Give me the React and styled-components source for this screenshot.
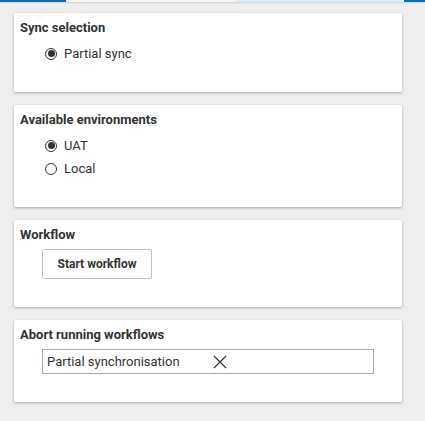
import React from "react";
import styled, { createGlobalStyle } from "styled-components";

const GlobalStyle = createGlobalStyle`
  html, body {
    margin: 0;
    padding: 0;
    background: #eeeeee;
    font-family: Roboto, "Liberation Sans", Arial, sans-serif;
    color: #333333;
  }
`;

const Page = styled.div`
  width: 425px;
  min-height: 421px;
  background: #eeeeee;
`;

const Stripe = styled.div`
  display: flex;
  height: 2px;
  box-shadow: 0 1px 2px rgba(0, 0, 0, 0.12);
`;

const Segment = styled.div`
  width: ${({ w }) => w}px;
  background: ${({ color }) => color};
`;

const Stack = styled.div`
  display: flex;
  flex-direction: column;
  gap: 13px;
  width: 388px;
  padding: 11px 0 0 14px;
`;

const Card = styled.section`
  background: #ffffff;
  border-radius: 2px;
  box-shadow: 0 1px 3px rgba(0, 0, 0, 0.28);
  padding: 6px 6px ${({ bottom }) => bottom}px 6px;
  display: flex;
  flex-direction: column;
  gap: ${({ gap }) => gap}px;
`;

const Title = styled.h3`
  margin: 0;
  font-size: 13px;
  font-weight: 700;
  line-height: 18px;
  color: #333333;
`;

const Body = styled.div`
  margin-left: 22px;
  display: flex;
  flex-direction: column;
  align-items: flex-start;
`;

const RadioRow = styled.label`
  display: flex;
  align-items: center;
  height: 23px;
  gap: 7px;
  font-size: 13px;
  color: #333333;
  padding-left: 3px;
`;

const RadioMark = styled.span`
  box-sizing: border-box;
  width: 12px;
  height: 12px;
  border-radius: 50%;
  border: 1.3px solid #333333;
  display: flex;
  align-items: center;
  justify-content: center;

  &::after {
    content: "";
    width: 7px;
    height: 7px;
    border-radius: 50%;
    background: ${({ checked }) => (checked ? "#333333" : "transparent")};
  }
`;

const Button = styled.button`
  box-sizing: border-box;
  height: 30px;
  width: 110px;
  background: #ffffff;
  border: 1px solid #c4c4c4;
  border-radius: 2px;
  font-family: inherit;
  font-size: 12px;
  font-weight: 700;
  color: #333333;
  padding: 0;
`;

const Field = styled.div`
  box-sizing: border-box;
  width: 332px;
  height: 25px;
  border: 1px solid #aaaaaa;
  display: flex;
  align-items: center;
  padding-left: 4px;
  font-size: 13px;
  color: #333333;
`;

const FieldText = styled.span`
  width: 166px;
`;

const Radio = ({ checked, children }) => (
  <RadioRow>
    <RadioMark checked={checked} />
    {children}
  </RadioRow>
);

const CloseIcon = () => (
  <svg width="14" height="14" viewBox="0 0 14 14">
    <path d="M1 1 L13 13 M13 1 L1 13" stroke="#333" strokeWidth="1.2" fill="none" />
  </svg>
);

export default function App() {
  return (
    <Page>
      <GlobalStyle />
      <Stripe>
        <Segment w={66} color="#0b6bb8" />
        <Segment w={169} color="#f7f7f7" />
        <Segment w={169} color="#d4eefa" />
        <Segment w={21} color="#0b6bb8" />
      </Stripe>
      <Stack>
        <Card bottom={27} gap={5}>
          <Title>Sync selection</Title>
          <Body>
            <Radio checked>Partial sync</Radio>
          </Body>
        </Card>
        <Card bottom={27} gap={5}>
          <Title>Available environments</Title>
          <Body>
            <Radio checked>UAT</Radio>
            <Radio>Local</Radio>
          </Body>
        </Card>
        <Card bottom={28} gap={5}>
          <Title>Workflow</Title>
          <Body>
            <Button>Start workflow</Button>
          </Body>
        </Card>
        <Card bottom={28} gap={5}>
          <Title>Abort running workflows</Title>
          <Body>
            <Field>
              <FieldText>Partial synchronisation</FieldText>
              <CloseIcon />
            </Field>
          </Body>
        </Card>
      </Stack>
    </Page>
  );
}
